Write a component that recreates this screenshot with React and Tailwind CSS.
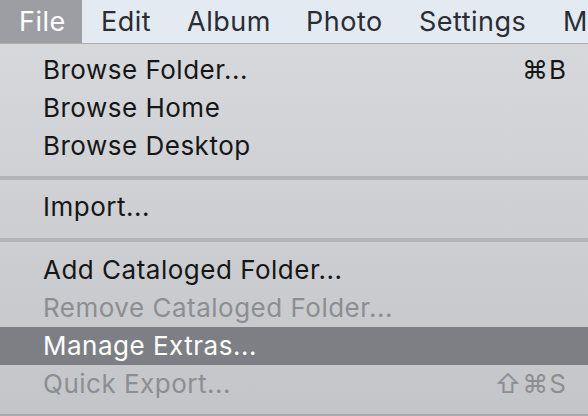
export default function App() {
  const font = { fontFamily: 'Inter, "DejaVu Sans", sans-serif' };
  const Row = ({ label, shortcut, disabled, active }) => (
    <div
      className={`h-[38px] flex items-center justify-between pl-[43px] pr-[21px] text-[26px] leading-none tracking-[0.5px] ${
        active ? "bg-[#7e7f85] text-white" : disabled ? "text-[#8c8e91]" : "text-[#161616]"
      }`}
    >
      <span>{label}</span>
      {shortcut && <span className="tracking-[1px]">{shortcut}</span>}
    </div>
  );
  const Sep = ({ top }) => (
    <div className={top === 12 ? "pt-[12px] pb-[9px]" : "pt-[11px] pb-[8px]"}>
      <div className="h-[4px] bg-[#b2b5b8]" />
    </div>
  );
  return (
    <div className="w-[588px] h-[416px] overflow-hidden relative" style={font}>
      <div className="h-[44px] bg-[#e3eaf2] border-b border-[#a9aeb4] flex items-stretch text-[27px] leading-none tracking-[0.5px] text-[#2a2d33] whitespace-nowrap overflow-hidden">
        <div className="w-[82px] shrink-0 bg-[#9c9ea3] text-white pl-[19px] flex items-center">File</div>
        <div className="w-[86px] shrink-0 pl-[19px] flex items-center">Edit</div>
        <div className="w-[119px] shrink-0 pl-[19px] flex items-center">Album</div>
        <div className="w-[113px] shrink-0 pl-[19px] flex items-center">Photo</div>
        <div className="w-[144px] shrink-0 pl-[19px] flex items-center">Settings</div>
        <div className="shrink-0 pl-[19px] flex items-center">Manage</div>
      </div>
      <div className="h-[372px] bg-gradient-to-b from-[#d6d8db] to-[#c3c5c8] pt-[7px] border-b-2 border-[#a9abad] whitespace-nowrap">
        <Row label="Browse Folder..." shortcut="⌘B" />
        <Row label="Browse Home" />
        <Row label="Browse Desktop" />
        <Sep />
        <Row label="Import..." />
        <Sep top={12} />
        <Row label="Add Cataloged Folder..." />
        <Row label="Remove Cataloged Folder..." disabled />
        <Row label="Manage Extras..." active />
        <Row label="Quick Export..." shortcut="⇧⌘S" disabled />
      </div>
    </div>
  );
}
